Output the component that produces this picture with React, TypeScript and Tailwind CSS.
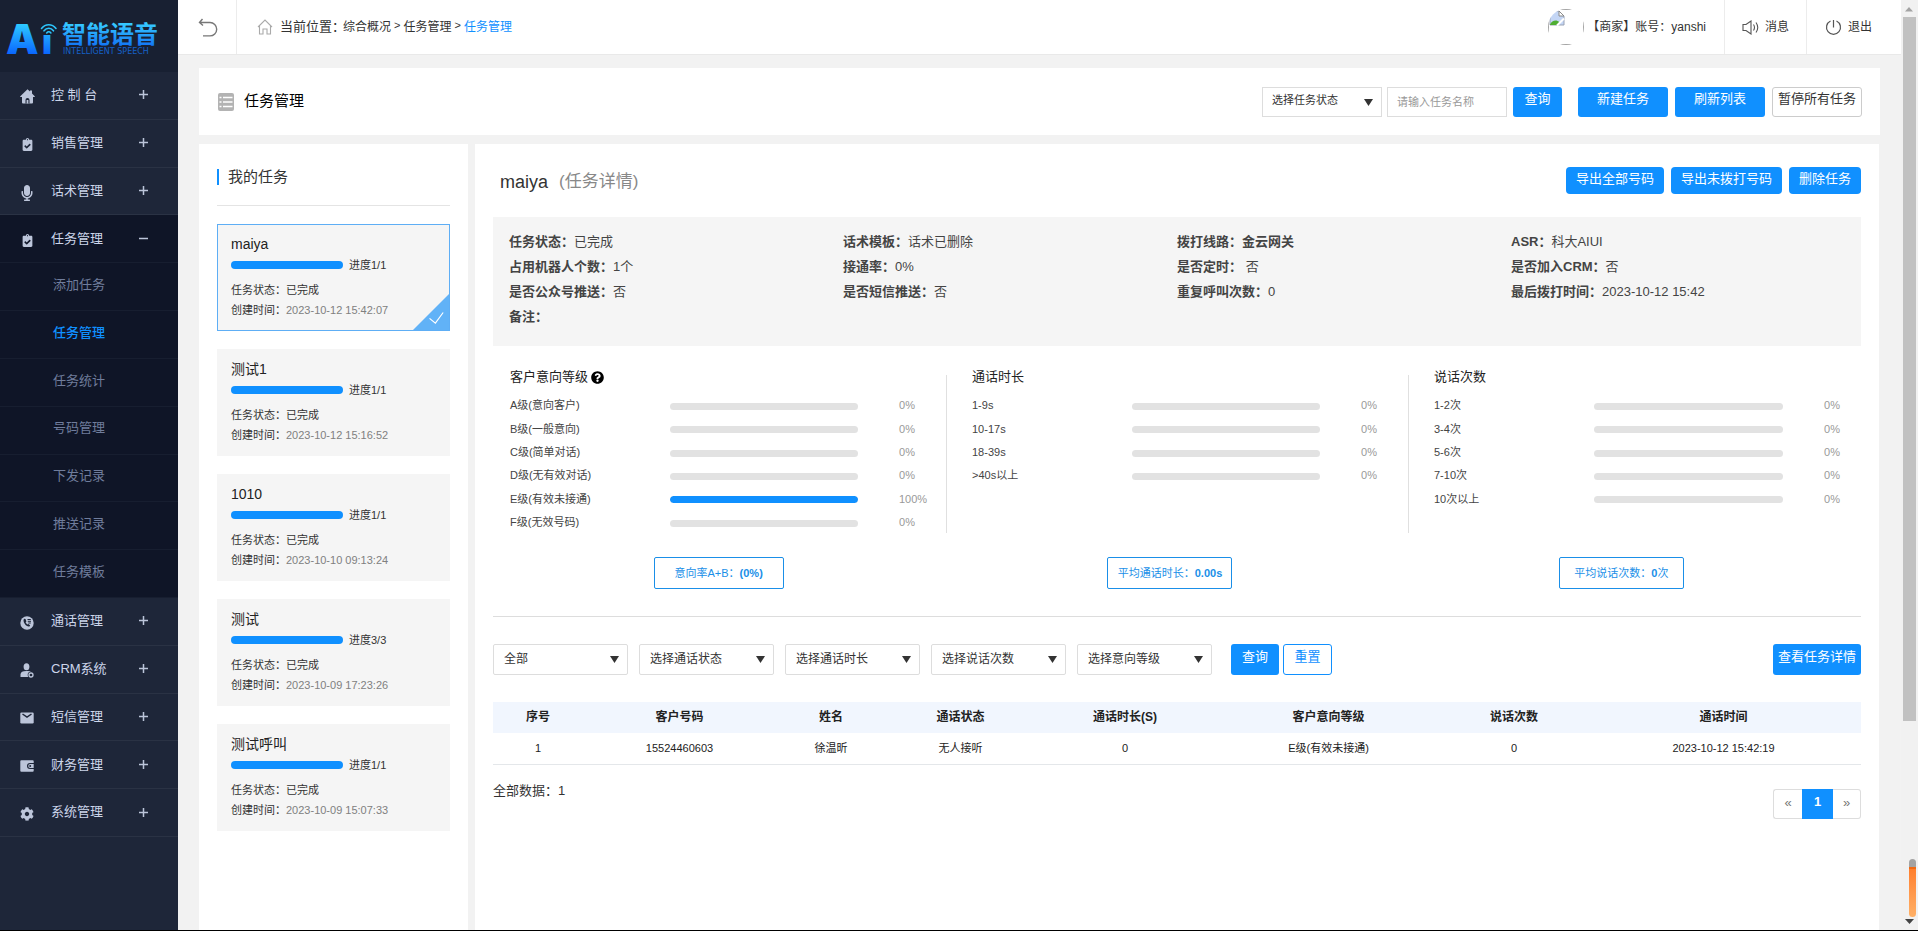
import type { ReactNode } from "react";
import { FaClipboardCheck, FaCog, FaMicrophone, FaQuestionCircle } from "react-icons/fa";

const HomeIcon = () => (
  <svg width="15" height="15" viewBox="0 0 15 15">
    <path d="M7.500.3 10 2.600V1.500h2v3l2.700 2.700q.5.800-.4.800H13v5.500q0 1-1 1H3q-1 0-1-1V8H.7q-.9 0-.4-.8z" fill="#bcc5da" />
    <path d="M5.500 14.500V11a2 2 0 0 1 4 0v3.500z" fill="#1e2639" />
    <rect x="6.600" y="11" width="1.800" height="3.500" fill="#bcc5da" />
  </svg>
);

const PhoneIcon = () => (
  <svg width="14" height="14" viewBox="0 0 14 14">
    <circle cx="7" cy="7" r="6.7" fill="#bcc5da" />
    <path d="M4.2 2.8c-1 .8-.9 3 .5 5 1.300 2 3.300 3.200 4.700 2.700l.8-.9-1.700-1.600-1 .5c-.9-.5-1.600-1.400-1.900-2.300l.8-.8-.9-2.400z" fill="#1e2639" />
    <path d="M7.500 3.500h3.300M7.800 5.300h3.200M8.300 7h2.500" stroke="#1e2639" strokeWidth="1" />
  </svg>
);

const UserIcon = () => (
  <svg width="14" height="15" viewBox="0 0 14 15">
    <ellipse cx="6.500" cy="3.700" rx="2.900" ry="3.500" fill="#bcc5da" />
    <path d="M.5 14v-2.500c0-2.500 2-3.500 6-3.500 2.500 0 4 .5 5 1.300V14z" fill="#bcc5da" />
    <circle cx="11" cy="12" r="3.300" fill="#1e2639" />
    <circle cx="11" cy="12" r="2" fill="none" stroke="#bcc5da" strokeWidth="1.300" />
  </svg>
);

const MailIcon = () => (
  <svg width="14" height="12" viewBox="0 0 14 12">
    <rect x="0.300" y="0.500" width="13.400" height="11" rx="1.200" fill="#bcc5da" />
    <path d="M2.500 2 7 5.200 11.500 2" fill="none" stroke="#1e2639" strokeWidth="1.500" />
  </svg>
);

const WalletIcon = () => (
  <svg width="14" height="12" viewBox="0 0 14 12">
    <path d="M.3 1.300Q.3.300 1.300.3h11.400q1 0 1 1V3H10a3 3 0 0 0 0 6h3.700v1.700q0 1-1 1H1.300q-1 0-1-1z" fill="#bcc5da" />
    <path d="M13.700 4H10.200a2 2 0 0 0 0 4h3.500z" fill="#bcc5da" />
    <circle cx="10.200" cy="6" r="1" fill="#1e2639" />
  </svg>
);

const menu: { label: string; icon: ReactNode; children?: string[] }[] = [
  { label: "控 制 台", icon: <HomeIcon /> },
  { label: "销售管理", icon: <FaClipboardCheck size={13} /> },
  { label: "话术管理", icon: <FaMicrophone size={16} /> },
  {
    label: "任务管理",
    icon: <FaClipboardCheck size={13} />,
    children: ["添加任务", "任务管理", "任务统计", "号码管理", "下发记录", "推送记录", "任务模板"],
  },
  { label: "通话管理", icon: <PhoneIcon /> },
  { label: "CRM系统", icon: <UserIcon /> },
  { label: "短信管理", icon: <MailIcon /> },
  { label: "财务管理", icon: <WalletIcon /> },
  { label: "系统管理", icon: <FaCog size={14} /> },
];

const tasks = [
  { name: "maiya", progress: "1/1", time: "2023-10-12 15:42:07" },
  { name: "测试1", progress: "1/1", time: "2023-10-12 15:16:52" },
  { name: "1010", progress: "1/1", time: "2023-10-10 09:13:24" },
  { name: "测试", progress: "3/3", time: "2023-10-09 17:23:26" },
  { name: "测试呼叫", progress: "1/1", time: "2023-10-09 15:07:33" },
];

const details = [
  ["任务状态：", "已完成"],
  ["话术模板：", "话术已删除"],
  ["拨打线路：", "金云网关"],
  ["ASR：", "科大AIUI"],
  ["占用机器人个数：", "1个"],
  ["接通率：", "0%"],
  ["是否定时：", "\u00a0否"],
  ["是否加入CRM：", "否"],
  ["是否公众号推送：", "否"],
  ["是否短信推送：", "否"],
  ["重复呼叫次数：", "0"],
  ["最后拨打时间：", "2023-10-12 15:42"],
  ["备注：", ""],
];

const stats = [
  {
    title: "客户意向等级",
    help: true,
    rows: [
      ["A级(意向客户)", 0],
      ["B级(一般意向)", 0],
      ["C级(简单对话)", 0],
      ["D级(无有效对话)", 0],
      ["E级(有效未接通)", 100],
      ["F级(无效号码)", 0],
    ] as [string, number][],
  },
  {
    title: "通话时长",
    rows: [["1-9s", 0], ["10-17s", 0], ["18-39s", 0], [">40s以上", 0]] as [string, number][],
  },
  {
    title: "说话次数",
    rows: [["1-2次", 0], ["3-4次", 0], ["5-6次", 0], ["7-10次", 0], ["10次以上", 0]] as [string, number][],
  },
];

const columns = [
  { title: "序号", width: "w-[90px]", value: "1" },
  { title: "客户号码", width: "w-[193px]", value: "15524460603" },
  { title: "姓名", width: "w-[110px]", value: "徐温昕" },
  { title: "通话状态", width: "w-[149px]", value: "无人接听" },
  { title: "通话时长(S)", width: "w-[180px]", value: "0" },
  { title: "客户意向等级", width: "w-[227px]", value: "E级(有效未接通)" },
  { title: "说话次数", width: "w-[144px]", value: "0" },
  { title: "通话时间", width: "w-[275px]", value: "2023-10-12 15:42:19" },
];

const filters = ["全部", "选择通话状态", "选择通话时长", "选择说话次数", "选择意向等级"];

const blueButton = "bg-[#1090ff] text-[13px] text-white";

function Logo() {
  return (
    <svg width="166" height="60" viewBox="0 -14 166 60" className="ml-1">
      <defs>
        <linearGradient id="mark" x1="0" y1="6" x2="0" y2="38" gradientUnits="userSpaceOnUse">
          <stop offset="0" stopColor="#2fd0ff" />
          <stop offset="1" stopColor="#0a66ff" />
        </linearGradient>
        <linearGradient id="word" x1="0" y1="8" x2="0" y2="29" gradientUnits="userSpaceOnUse">
          <stop offset="0" stopColor="#35c8ff" />
          <stop offset="1" stopColor="#1479f5" />
        </linearGradient>
      </defs>
      <text x="2" y="38" fontFamily="Inter, sans-serif" fontWeight="900" fontSize="41" fill="url(#mark)">A</text>
      <text x="38" y="38" fontFamily="Inter, sans-serif" fontWeight="900" fontSize="34" fill="url(#mark)">ı</text>
      <g fill="none" stroke="#2cc4fb" strokeWidth="1.600" strokeLinecap="round">
        <path d="M37.500 12.500c4-5 10.500-5 14.500 0" />
        <path d="M40 14.800c2.800-3.400 6.800-3.400 9.500 0" />
        <path d="M42.700 17c1.300-1.600 2.900-1.600 4.200 0" />
      </g>
      <text x="58" y="27" fontFamily="Noto Sans CJK SC, sans-serif" fontWeight="700" fontSize="24" fill="url(#word)">智能语音</text>
      <text x="59" y="38" fontFamily="DejaVu Sans, sans-serif" fontSize="8" fill="#1560c8">INTELLIGENT SPEECH</text>
    </svg>
  );
}

function Sidebar() {
  return (
    <aside className="w-[178px] shrink-0 bg-[#1e2639]">
      <div className="flex h-[72px] items-end bg-[#182032] pb-[10px]">
        <Logo />
      </div>
      <nav className="grid h-[765px] auto-rows-fr text-[13px] text-[#ccd5ea]">
        {menu.map((item) => {
          const open = !!item.children;
          return [
            <a
              key={item.label}
              href="#"
              className={`flex items-center border-b pb-px ${open ? "border-[#171e30] bg-[#0f1527]" : "border-[#2a3244]"}`}
            >
              <span className="ml-[18px] mt-1 flex w-[18px] justify-center text-[#bcc5da]">{item.icon}</span>
              <span className="ml-[15px] flex-1">{item.label}</span>
              <svg width="9" height="9" className="mr-[30px]" stroke="#bcc5da" strokeWidth="1.500">
                <path d={open ? "M0 4.500H9" : "M0 4.500H9M4.500 0V9"} />
              </svg>
            </a>,
            ...(item.children ?? []).map((child, i) => (
              <a
                key={`sub-${child}`}
                href="#"
                className={`flex items-center border-b border-[#171e30] bg-[#0f1527] pb-1 pl-[53px] ${i === 1 ? "font-medium text-[#1090ff]" : "text-[#707d9c]"}`}
              >
                {child}
              </a>
            )),
          ];
        })}
      </nav>
    </aside>
  );
}

function Header() {
  return (
    <header className="flex h-[55px] items-stretch border-b border-[#e9e9e9] bg-white text-[12px] text-[#333]">
      <button aria-label="返回" className="flex w-[59px] items-center justify-center border-r border-[#ececec] pl-0.5 pt-0.5">
        <svg width="20" height="20" viewBox="0 0 20 20" fill="none" stroke="#777" strokeWidth="1.400">
          <path d="M4.500 1 1.500 4.500 5 7.500M1.500 4.500H12a6.700 6.700 0 0 1 0 13.400H5" />
        </svg>
      </button>
      <div className="flex items-center pl-[20px]">
        <svg width="16" height="16" viewBox="0 0 16 16" fill="none" stroke="#aaa" strokeWidth="1.100">
          <path d="M1 8 8 1l7 7M2.500 7v8H6v-5h4v5h3.500V7" />
        </svg>
        <span className="ml-[7px] text-[13px]">当前位置：</span>
        <a href="#" className="-ml-0.5">综合概况</a>
        <span className="mx-[3px] pb-1 text-[11px]">&gt;</span>
        <a href="#">任务管理</a>
        <span className="mx-[3px] pb-1 text-[11px]">&gt;</span>
        <a href="#" className="text-[#1090ff]">任务管理</a>
      </div>
      <div className="ml-auto flex items-center">
        <svg width="36" height="36" viewBox="0 0 36 36">
          <defs>
            <clipPath id="round">
              <circle cx="18" cy="18" r="18" />
            </clipPath>
          </defs>
          <g clipPath="url(#round)">
            <rect x="0.500" y="0.500" width="35" height="35" fill="none" stroke="#a3a3a3" />
            <path d="M2 2h9l5 5v9H2z" fill="#c4d6f5" stroke="#9aa3b5" />
            <path d="M11 2v5h5z" fill="#fff" stroke="#8a8a8a" />
            <path d="M2 15.500c2-4 6-5.500 9.500-2.500L9 16H2z" fill="#4fae33" />
            <path d="m9 16.500 7-7" stroke="#fff" strokeWidth="2" />
          </g>
        </svg>
        <span className="ml-[3px]">【商家】账号：yanshi</span>
      </div>
      <button className="ml-[18px] flex items-center gap-[6px] border-l border-[#ececec] px-[17px]">
        <svg width="17" height="15" viewBox="0 0 17 15" fill="none" stroke="#555" strokeWidth="1.100">
          <path d="M1 4.500h3L9 1v13L4 10.500H1zM11.500 4.500q2 3 0 6M14 2.500q3.500 5 0 10" />
        </svg>
        消息
      </button>
      <button className="flex w-[95px] items-center gap-[6px] border-l border-[#ececec] pl-[18px]">
        <svg width="17" height="17" viewBox="0 0 17 17" fill="none" stroke="#555" strokeWidth="1.200">
          <path d="M8.500 1v7.500M5.500 2a7 7 0 1 0 6 0" />
        </svg>
        退出
      </button>
    </header>
  );
}

function Select({ label, className }: { label: string; className: string }) {
  return (
    <div className="relative">
      <select aria-label={label} className={`appearance-none border border-[#ddd] bg-white pb-0.5 text-[#333] ${className}`}>
        <option>{label}</option>
      </select>
      <svg width="9" height="7" viewBox="0 0 9 7" className="pointer-events-none absolute right-[9px] top-[12px]">
        <path d="M0 0h9L4.500 7z" fill="#333" />
      </svg>
    </div>
  );
}

function TitleBar() {
  return (
    <section className="flex h-[67px] items-center bg-white pl-[19px] pr-[18px]">
      <svg width="16" height="18" viewBox="0 0 16 18">
        <rect width="16" height="18" rx="2" fill="#b3b3b3" />
        <path d="M1.500 4.500h2M5 4.500h9.500M1.500 9h2M5 9h9.500M1.500 13.500h2M5 13.500h9.500" stroke="#fff" strokeWidth="1.500" />
      </svg>
      <h1 className="ml-[10px] text-[15px] text-black">任务管理</h1>
      <form className="ml-auto flex items-center" onSubmit={(e) => e.preventDefault()}>
        <Select label="选择任务状态" className="h-[30px] w-[120px] pl-[9px] text-[11px]" />
        <input
          aria-label="任务名称"
          placeholder="请输入任务名称"
          className="ml-[5px] h-[30px] w-[120px] border border-[#ddd] px-[9px] text-[11px] placeholder:text-[#999]"
        />
        <button className={`ml-[6px] h-[30px] w-[49px] rounded-[3px] pb-1.5 ${blueButton}`}>查询</button>
      </form>
      <div className="ml-[16px] flex gap-[7px]">
        <button className={`h-[30px] w-[90px] rounded-[3px] pb-1.5 ${blueButton}`}>新建任务</button>
        <button className={`h-[30px] w-[90px] rounded-[3px] pb-1.5 ${blueButton}`}>刷新列表</button>
        <button className="h-[30px] w-[90px] rounded-[3px] border border-[#ccc] bg-white pb-1.5 text-[13px] text-[#333]">暂停所有任务</button>
      </div>
    </section>
  );
}

function TaskList() {
  return (
    <section className="w-[269px] shrink-0 bg-white px-[18px] pt-[25px]">
      <div className="flex h-[37px] items-start border-b border-[#e4e4e4]">
        <h2 className="border-l-2 border-[#1090ff] pl-[9px] text-[15px] leading-[16px] text-[#333]">我的任务</h2>
      </div>
      <ul className="mt-[18px] space-y-[18px] text-[11px] leading-[20px] text-[#333]">
        {tasks.map((task, i) => (
          <li
            key={task.name}
            className={`relative h-[107px] border bg-[#f5f5f5] px-[13px] pt-[9px] ${i === 0 ? "border-[#5eaef5]" : "border-[#f5f5f5]"}`}
          >
            <h3 className="text-[14px] text-[#222]">{task.name}</h3>
            <div className="mt-px flex items-center gap-[6px]">
              <div className="h-2 w-[112px] rounded-full bg-[#1090ff]" />
              <span>进度{task.progress}</span>
            </div>
            <p className="mt-[5px]">任务状态：已完成</p>
            <p>
              创建时间：<span className="text-[#808080]">{task.time}</span>
            </p>
            {i === 0 && (
              <svg width="36" height="36" viewBox="0 0 37 37" className="absolute bottom-0 right-0">
                <path d="M37 0v37H0z" fill="#61b2f7" />
                <path d="m17 25 6 5 8-11" fill="none" stroke="#fff" strokeWidth="1.200" />
              </svg>
            )}
          </li>
        ))}
      </ul>
    </section>
  );
}

function Stats() {
  return (
    <div className="-ml-2 -mr-2.5 mt-[29px] grid grid-cols-3">
      {stats.map((group, g) => (
        <div key={group.title} className={`h-[158px] pl-[25px] ${g < 2 ? "border-r border-[#e0e0e0]" : ""}`}>
          <h3 className="-mt-2 flex h-5 items-center gap-[3px] text-[13px] text-[#222]">
            {group.title}
            {group.help && <FaQuestionCircle size={13} className="text-black" />}
          </h3>
          <div className="mt-[7px] grid h-[140px] grid-rows-6 text-[11px] text-[#444]">
            {group.rows.map(([label, value]) => (
              <div key={label} className="grid grid-cols-[160px_1fr_88px] items-center">
                <span>{label}</span>
                <div className="mt-0.5 h-[7px] overflow-hidden rounded-full bg-[#e2e2e2]">
                  <div className="h-full rounded-full bg-[#1090ff]" style={{ width: `${value}%` }} />
                </div>
                <span className="pl-[41px] text-[#999]">{value}%</span>
              </div>
            ))}
          </div>
        </div>
      ))}
    </div>
  );
}

function Detail() {
  const outline = "h-[32px] rounded-[2px] border border-[#1a8fe8] text-[11px] text-[#1a8fe8]";
  return (
    <section className="min-w-0 flex-1 bg-white px-[18px] pt-[23px]">
      <div className="flex h-[50px] items-start">
        <h2 className="ml-[7px] flex items-center gap-[11px] text-[18px] leading-[30px] text-[#333]">
          maiya <span className="text-[17px] text-[#888]">(任务详情)</span>
        </h2>
        <div className="ml-auto flex gap-[7px]">
          {["导出全部号码", "导出未拨打号码", "删除任务"].map((label) => (
            <button key={label} className={`h-[27px] rounded px-[10px] pb-1 ${blueButton}`}>{label}</button>
          ))}
        </div>
      </div>

      <dl className="grid h-[129px] grid-cols-4 content-start bg-[#f5f5f5] px-4 pt-[12px] text-[13px] leading-[25px] text-[#444]">
        {details.map(([label, value]) => (
          <div key={label} className="flex">
            <dt className="font-bold">{label}</dt>
            <dd className={value === "金云网关" ? "font-bold" : ""}>{value}</dd>
          </div>
        ))}
      </dl>

      <Stats />

      <div className="mr-[14px] mt-[24px] grid grid-cols-3 justify-items-center">
        <button className={`w-[130px] ${outline}`}>
          意向率A+B：<span className="font-bold">(0%)</span>
        </button>
        <button className={`w-[125px] ${outline}`}>
          平均通话时长：<span className="font-bold">0.00s</span>
        </button>
        <button className={`w-[125px] ${outline}`}>
          平均说话次数：<span className="font-bold">0</span>次
        </button>
      </div>

      <form className="mt-[27px] flex items-center border-t border-[#ddd] pt-[27px]" onSubmit={(e) => e.preventDefault()}>
        <div className="flex gap-[11px]">
          {filters.map((label) => (
            <Select key={label} label={label} className="h-[31px] w-[135px] rounded-[2px] pl-[10px] text-[12px]" />
          ))}
        </div>
        <button className={`ml-[19px] h-[31px] w-[48px] rounded-[3px] pb-1.5 ${blueButton}`}>查询</button>
        <button type="reset" className="ml-1 h-[31px] w-[49px] rounded-[3px] border border-[#1090ff] pb-1.5 text-[13px] text-[#1090ff]">重置</button>
        <button type="button" className={`ml-auto h-[31px] w-[88px] rounded-[3px] pb-1.5 ${blueButton}`}>查看任务详情</button>
      </form>

      <table className="mt-[27px] w-full table-fixed text-center text-[#222]">
        <thead>
          <tr className="h-[31px] bg-[#f1f6fe] text-[12px]">
            {columns.map((c) => (
              <th key={c.title} className={`pb-0.5 ${c.width}`}>{c.title}</th>
            ))}
          </tr>
        </thead>
        <tbody>
          <tr className="h-[31px] border-b border-[#e4e7ea] text-[11px]">
            {columns.map((c) => (
              <td key={c.title}>{c.value}</td>
            ))}
          </tr>
        </tbody>
      </table>

      <div className="mt-[15px] flex items-start justify-between text-[13px] text-[#333]">
        <p className="leading-[22px]">全部数据：1</p>
        <nav className="mt-[9px] flex h-[30px] text-[13px] text-[#777]">
          <a href="#" aria-label="上一页" className="flex w-[29px] items-center justify-center rounded-l-[3px] border border-r-0 border-[#ddd] pb-0.5">«</a>
          <a href="#" className="flex w-[31px] items-center justify-center bg-[#1090ff] pb-1 font-bold text-white">1</a>
          <a href="#" aria-label="下一页" className="flex w-[28px] items-center justify-center rounded-r-[3px] border border-l-0 border-[#ddd] pb-0.5">»</a>
        </nav>
      </div>
    </section>
  );
}

// always-visible scroll track on the right edge of the window
function ScrollTrack() {
  return (
    <div className="flex w-[17px] shrink-0 flex-col items-center bg-[#f1f1f1]">
      <svg width="17" height="17">
        <path d="M8 7l4 4.500H4z" fill="#a3a3a3" />
      </svg>
      <div className="h-[704px] w-[13px] bg-[#c1c1c1]" />
      <div className="mt-auto mr-[2px] h-[8px] w-[7px] self-end rounded-t-full bg-[#a3a3a3]" />
      <div className="mr-[2px] h-[50px] w-[7px] self-end rounded-b-full border-t-2 border-[#f06a14] bg-linear-to-b from-[#ff7f2c] to-[#ffb066]" />
      <svg width="17" height="13">
        <path d="M4 2h9L8.500 7z" fill="#444" />
      </svg>
    </div>
  );
}

export default function App() {
  return (
    <div className="flex min-h-screen border-b border-black bg-[#f2f2f2] font-['Liberation_Sans','Noto_Sans_CJK_SC',sans-serif]">
      <Sidebar />
      <div className="flex min-w-0 flex-1 flex-col">
        <Header />
        <main className="flex flex-1 flex-col gap-[9px] pl-[21px] pr-[21px] pt-[13px]">
          <TitleBar />
          <div className="mr-px flex flex-1 gap-[7px]">
            <TaskList />
            <Detail />
          </div>
        </main>
      </div>
      <ScrollTrack />
    </div>
  );
}
